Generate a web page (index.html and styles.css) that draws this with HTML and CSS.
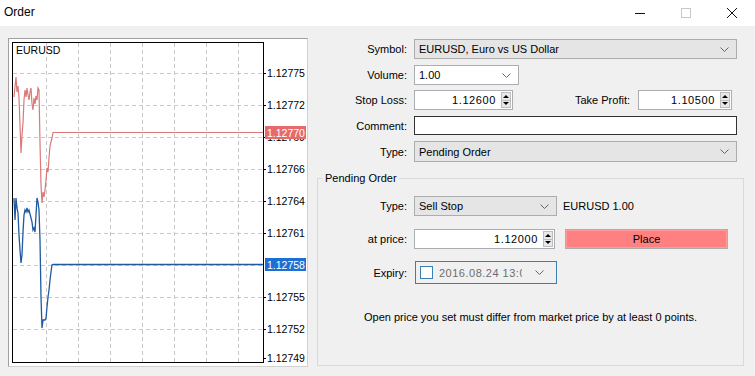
FILE: index.html
```html
<!DOCTYPE html>
<html>
<head>
  <title>Order</title>
  <link rel="stylesheet" href="styles.css">
</head>
<body>
  <div class="window">
    <div class="titlebar">
      <span class="title">Order</span>
      <div class="controls">
        <span class="ctl">
          <svg width="12" height="12" viewBox="0 0 12 12"><line x1="1" y1="6.5" x2="11" y2="6.5" stroke="#111" stroke-width="1"/></svg>
        </span>
        <span class="ctl">
          <svg width="12" height="12" viewBox="0 0 12 12"><rect x="1.5" y="1.5" width="9" height="9" fill="none" stroke="#c8c8c8" stroke-width="1"/></svg>
        </span>
        <span class="ctl">
          <svg width="12" height="12" viewBox="0 0 12 12"><path d="M1 1 L11 11 M11 1 L1 11" stroke="#111" stroke-width="1"/></svg>
        </span>
      </div>
    </div>

    <div class="main">
      <!-- price chart -->
      <div class="chart">
        <svg width="298" height="327" viewBox="0 0 298 327">
          <g stroke="#c8c8c8" stroke-dasharray="4 3" stroke-width="1">
            <line x1="37.5" y1="4" x2="37.5" y2="323"/>
            <line x1="69.5" y1="4" x2="69.5" y2="323"/>
            <line x1="101.5" y1="4" x2="101.5" y2="323"/>
            <line x1="133.5" y1="4" x2="133.5" y2="323"/>
            <line x1="165.5" y1="4" x2="165.5" y2="323"/>
            <line x1="197.5" y1="4" x2="197.5" y2="323"/>
            <line x1="229.5" y1="4" x2="229.5" y2="323"/>
            <line x1="4" y1="34.5" x2="254" y2="34.5"/>
            <line x1="4" y1="66.5" x2="254" y2="66.5"/>
            <line x1="4" y1="98.5" x2="254" y2="98.5"/>
            <line x1="4" y1="130.5" x2="254" y2="130.5"/>
            <line x1="4" y1="162.5" x2="254" y2="162.5"/>
            <line x1="4" y1="194.5" x2="254" y2="194.5"/>
            <line x1="4" y1="226.5" x2="254" y2="226.5"/>
            <line x1="4" y1="258.5" x2="254" y2="258.5"/>
            <line x1="4" y1="290.5" x2="254" y2="290.5"/>
          </g>
          <g stroke="#000" stroke-width="1">
            <line x1="254" y1="34.5" x2="257" y2="34.5"/>
            <line x1="254" y1="66.5" x2="257" y2="66.5"/>
            <line x1="254" y1="98.5" x2="257" y2="98.5"/>
            <line x1="254" y1="130.5" x2="257" y2="130.5"/>
            <line x1="254" y1="162.5" x2="257" y2="162.5"/>
            <line x1="254" y1="194.5" x2="257" y2="194.5"/>
            <line x1="254" y1="258.5" x2="257" y2="258.5"/>
            <line x1="254" y1="290.5" x2="257" y2="290.5"/>
            <line x1="254" y1="319.5" x2="257" y2="319.5"/>
          </g>
          <polyline fill="none" stroke="#d9797a" stroke-width="1.2" points="5,58 7,38 8,53 9,47 10,59 11,86 12,114 13,96 14,84 15,61 16,51 17,58 18,49 19,56 20,61 21,53 22,49 23,65 24,71 25,59 26,65 27,57 28,61 29,49 30,51 31,104 32,146 33,164 34,153 35,158 36,151 37,141 38,129 39,133 40,119 41,107 42,103 43,99 44,93.5 254,93.5"/>
          <polyline fill="none" stroke="#1f5aa0" stroke-width="1.3" points="5,159 6,181 7,159 8,169 9,174 10,196 11,211 12,224 13,216 14,193 15,176 16,171 17,173 18,169 19,173 20,171 21,175 22,179 23,183 24,191 25,189 26,193 27,176 28,159 29,163 30,171 31,201 32,258 33,289 34,281 35,281 36,281 37,279 38,268 39,258 40,251 41,241 42,233 43,226 44,225.5 254,225.5"/>
          <rect x="3.5" y="3.5" width="251" height="320" fill="none" stroke="#000" stroke-width="1"/>
          <g class="axis">
            <text x="7" y="15">EURUSD</text>
            <text x="258" y="38">1.12775</text>
            <text x="258" y="70">1.12772</text>
            <text x="258" y="102">1.12769</text>
            <text x="258" y="134">1.12766</text>
            <text x="258" y="166">1.12764</text>
            <text x="258" y="198">1.12761</text>
            <text x="258" y="262">1.12755</text>
            <text x="258" y="294">1.12752</text>
            <text x="258" y="323">1.12749</text>
          </g>
          <rect x="256" y="87" width="41" height="13" fill="#e66a6a"/>
          <text class="tag" x="258" y="97.5">1.12770</text>
          <rect x="256" y="219" width="41" height="13" fill="#1d6fd4"/>
          <text class="tag" x="258" y="229.5">1.12758</text>
        </svg>
      </div>

      <div class="form">
        <div class="row r-symbol">
          <label>Symbol:</label>
          <div class="combo grey w-full">EURUSD, Euro vs US Dollar
            <svg class="chev" width="9" height="5" viewBox="0 0 9 5"><polyline points="0.5,0.5 4.5,4.5 8.5,0.5" fill="none" stroke="#666"/></svg>
          </div>
        </div>
        <div class="row r-volume">
          <label>Volume:</label>
          <div class="combo white w-volume">1.00
            <svg class="chev" width="9" height="5" viewBox="0 0 9 5"><polyline points="0.5,0.5 4.5,4.5 8.5,0.5" fill="none" stroke="#666"/></svg>
          </div>
        </div>
        <div class="row r-stop">
          <label>Stop Loss:</label>
          <div class="pair">
            <div class="spin w-stop">
              <span class="val">1.12600</span>
              <span class="arrows"><span class="up"></span><span class="down"></span></span>
            </div>
            <label class="tp-label">Take Profit:</label>
            <div class="spin w-tp">
              <span class="val">1.10500</span>
              <span class="arrows"><span class="up"></span><span class="down"></span></span>
            </div>
          </div>
        </div>
        <div class="row r-comment">
          <label>Comment:</label>
          <div class="text-input w-full"></div>
        </div>
        <div class="row r-type">
          <label>Type:</label>
          <div class="combo grey w-full tall">Pending Order
            <svg class="chev" width="9" height="5" viewBox="0 0 9 5"><polyline points="0.5,0.5 4.5,4.5 8.5,0.5" fill="none" stroke="#666"/></svg>
          </div>
        </div>

        <fieldset class="group">
          <legend>Pending Order</legend>
          <div class="grow g-type">
            <label>Type:</label>
            <div class="line">
              <div class="combo grey w-sell">Sell Stop
                <svg class="chev" width="9" height="5" viewBox="0 0 9 5"><polyline points="0.5,0.5 4.5,4.5 8.5,0.5" fill="none" stroke="#666"/></svg>
              </div>
              <span class="info">EURUSD 1.00</span>
            </div>
          </div>
          <div class="grow g-price">
            <label>at price:</label>
            <div class="line">
              <div class="spin w-price">
                <span class="val">1.12000</span>
                <span class="arrows"><span class="up"></span><span class="down"></span></span>
              </div>
              <button type="button" class="place">Place</button>
            </div>
          </div>
          <div class="grow g-expiry">
            <label>Expiry:</label>
            <div class="expiry">
              <span class="check"></span>
              <span class="date">2016.08.24 13:04</span>
              <svg class="chev" width="9" height="5" viewBox="0 0 9 5"><polyline points="0.5,0.5 4.5,4.5 8.5,0.5" fill="none" stroke="#666"/></svg>
            </div>
          </div>
          <p class="note">Open price you set must differ from market price by at least 0 points.</p>
        </fieldset>
      </div>
    </div>
  </div>
</body>
</html>
```

FILE: styles.css
```css
/* Order dialog */
body {
  margin: 0;
  background-color: #F0F0F0;
  font-family: "Liberation Sans", Arial, sans-serif;
  font-size: 11px;
  color: #000;
}

.window {
  width: 755px;
  height: 376px;
  overflow: hidden;
}

.titlebar {
  height: 26px;
  background-color: #FFF;
  display: flex;
  align-items: center;
  justify-content: space-between;
}

.title {
  font-size: 12px;
  padding-left: 4px;
  padding-bottom: 2px;
}

.controls {
  display: flex;
  height: 26px;
}

.ctl {
  width: 46px;
  display: flex;
  align-items: center;
  justify-content: center;
}

.main {
  display: flex;
  padding: 12px 0 0 8px;
}

.chart {
  width: 298px;
  height: 327px;
  background-color: #FFF;
  border: 1px solid #D0D0D0;
  border-top-color: #A0A0A0;
  border-left-color: #A0A0A0;
}

.chart svg {
  display: block;
}

.axis text {
  font-family: "Liberation Sans", Arial, sans-serif;
  font-size: 10.5px;
  fill: #000;
}

.tag {
  font-family: "Liberation Sans", Arial, sans-serif;
  font-size: 10.5px;
  fill: #FFF;
}

.form {
  margin-left: 9px;
  width: 427px;
  padding-top: 1px;
}

.row {
  display: grid;
  grid-template-columns: 90px 1fr;
  column-gap: 7px;
  align-items: center;
  height: 20px;
}

.row label,
.grow label {
  text-align: right;
}

.r-volume { margin-top: 6px; }
.r-stop { margin-top: 5px; }
.r-comment { margin-top: 6px; height: 19px; }
.r-type { margin-top: 6px; height: 21px; }

.combo {
  box-sizing: border-box;
  height: 20px;
  display: flex;
  align-items: center;
  justify-content: space-between;
  padding: 0 7px 0 4px;
  border: 1px solid #ADADAD;
}

.combo.tall {
  height: 21px;
}

.combo.grey {
  background-color: #E5E5E5;
}

.combo.white {
  background-color: #FFF;
  border-color: #ABADB3;
}

.w-full { width: 323px; }
.w-volume { width: 105px; }
.w-sell { width: 143px; }

.pair {
  display: flex;
  align-items: center;
}

.tp-label {
  flex: 1;
  margin-right: 8px;
}

.spin {
  box-sizing: border-box;
  height: 20px;
  display: flex;
  align-items: center;
  justify-content: flex-end;
  background-color: #FFF;
  border: 1px solid #ABADB3;
  padding-right: 1px;
  letter-spacing: 0.6px;
}

.spin .val {
  margin-right: 5px;
}

.w-stop { width: 99px; }
.w-tp { width: 94px; margin-right: 12px; }
.w-price { width: 141px; }

.arrows {
  width: 10px;
  height: 16px;
  display: flex;
  flex-direction: column;
  border: 1px solid #BDBDBD;
  background-color: #E8E8E8;
  box-sizing: border-box;
}

.arrows span {
  flex: 1;
  display: flex;
  align-items: center;
  justify-content: center;
}

.arrows .up {
  border-bottom: 1px solid #BDBDBD;
}

.arrows .up::before {
  content: "";
  border-left: 3px solid transparent;
  border-right: 3px solid transparent;
  border-bottom: 3px solid #000;
}

.arrows .down::before {
  content: "";
  border-left: 3px solid transparent;
  border-right: 3px solid transparent;
  border-top: 3px solid #000;
}

.text-input {
  box-sizing: border-box;
  height: 19px;
  background-color: #FFF;
  border: 1px solid #333;
}

.group {
  box-sizing: border-box;
  margin: 9px 0 0 0;
  padding: 0;
  height: 195px;
  border: 1px solid #D9D9D9;
  min-width: 0;
}

.group legend {
  margin-left: 5px;
  padding: 0 2px;
  font-size: 11px;
  line-height: 15px;
}

.grow {
  display: grid;
  grid-template-columns: 89px 1fr;
  column-gap: 7px;
  align-items: center;
  height: 20px;
}

.g-type { margin-top: 10px; }
.g-price { margin-top: 13px; }
.g-expiry { margin-top: 12px; height: 23px; }

.line {
  display: flex;
  align-items: center;
}

.info {
  margin-left: 6px;
}

.place {
  box-sizing: border-box;
  margin-left: 10px;
  width: 163px;
  height: 20px;
  padding: 0;
  font-family: inherit;
  font-size: 11px;
  color: #000;
  background-color: #FF8080;
  border: 1px solid #ADADAD;
  box-shadow: inset 0 0 0 1px #FF9A9A;
}

.expiry {
  box-sizing: border-box;
  margin-left: 1px;
  width: 142px;
  height: 23px;
  display: flex;
  align-items: center;
  border: 1px solid #3C7FB1;
  background-color: #F0F0F0;
  padding: 0 12px 0 4px;
}

.check {
  box-sizing: border-box;
  width: 13px;
  height: 13px;
  border: 1px solid #3C7FB1;
  background-color: #FFF;
  flex-shrink: 0;
}

.date {
  margin-left: 6px;
  width: 83px;
  overflow: hidden;
  white-space: nowrap;
  color: #6D6D6D;
  letter-spacing: 0.5px;
}

.expiry .chev {
  margin-left: auto;
}

.note {
  margin: 26px 0 0 0;
  text-align: center;
  line-height: 15px;
}
```
